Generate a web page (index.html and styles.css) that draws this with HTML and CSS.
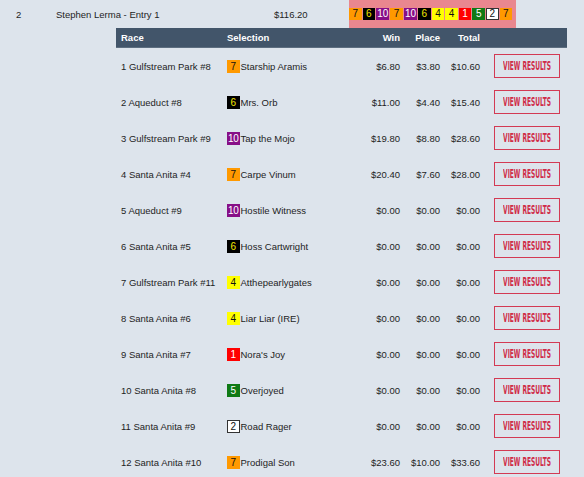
FILE: index.html
```html
<!DOCTYPE html>
<html>
<head>
<meta charset="utf-8">
<link rel="stylesheet" href="styles.css">
</head>
<body>
<div class="entry">
  <div class="entry-row">
    <span class="rank">2</span>
    <span class="name">Stephen Lerma - Entry 1</span>
    <span class="amount">$116.20</span>
    <div class="picks">
      <span class="pp p7">7</span><span class="pp p6">6</span><span class="pp p10">10</span><span class="pp p7">7</span><span class="pp p10">10</span><span class="pp p6">6</span><span class="pp p4">4</span><span class="pp p4">4</span><span class="pp p1">1</span><span class="pp p5">5</span><span class="pp p2">2</span><span class="pp p7">7</span>
    </div>
  </div>
  <div class="detail">
    <div class="drow dhead">
      <span class="c-race">Race</span>
      <span class="c-sel">Selection</span>
      <span class="c-num">Win</span>
      <span class="c-num">Place</span>
      <span class="c-num">Total</span>
      <span class="c-btn"></span>
    </div>
    <div class="drow"><span class="c-race">1 Gulfstream Park #8</span><span class="c-sel"><span class="pp p7">7</span>Starship Aramis</span><span class="c-num">$6.80</span><span class="c-num">$3.80</span><span class="c-num">$10.60</span><span class="c-btn"><a class="btn"><span>VIEW RESULTS</span></a></span></div>
    <div class="drow"><span class="c-race">2 Aqueduct #8</span><span class="c-sel"><span class="pp p6">6</span>Mrs. Orb</span><span class="c-num">$11.00</span><span class="c-num">$4.40</span><span class="c-num">$15.40</span><span class="c-btn"><a class="btn"><span>VIEW RESULTS</span></a></span></div>
    <div class="drow"><span class="c-race">3 Gulfstream Park #9</span><span class="c-sel"><span class="pp p10">10</span>Tap the Mojo</span><span class="c-num">$19.80</span><span class="c-num">$8.80</span><span class="c-num">$28.60</span><span class="c-btn"><a class="btn"><span>VIEW RESULTS</span></a></span></div>
    <div class="drow"><span class="c-race">4 Santa Anita #4</span><span class="c-sel"><span class="pp p7">7</span>Carpe Vinum</span><span class="c-num">$20.40</span><span class="c-num">$7.60</span><span class="c-num">$28.00</span><span class="c-btn"><a class="btn"><span>VIEW RESULTS</span></a></span></div>
    <div class="drow"><span class="c-race">5 Aqueduct #9</span><span class="c-sel"><span class="pp p10">10</span>Hostile Witness</span><span class="c-num">$0.00</span><span class="c-num">$0.00</span><span class="c-num">$0.00</span><span class="c-btn"><a class="btn"><span>VIEW RESULTS</span></a></span></div>
    <div class="drow"><span class="c-race">6 Santa Anita #5</span><span class="c-sel"><span class="pp p6">6</span>Hoss Cartwright</span><span class="c-num">$0.00</span><span class="c-num">$0.00</span><span class="c-num">$0.00</span><span class="c-btn"><a class="btn"><span>VIEW RESULTS</span></a></span></div>
    <div class="drow"><span class="c-race">7 Gulfstream Park #11</span><span class="c-sel"><span class="pp p4">4</span>Atthepearlygates</span><span class="c-num">$0.00</span><span class="c-num">$0.00</span><span class="c-num">$0.00</span><span class="c-btn"><a class="btn"><span>VIEW RESULTS</span></a></span></div>
    <div class="drow"><span class="c-race">8 Santa Anita #6</span><span class="c-sel"><span class="pp p4">4</span>Liar Liar (IRE)</span><span class="c-num">$0.00</span><span class="c-num">$0.00</span><span class="c-num">$0.00</span><span class="c-btn"><a class="btn"><span>VIEW RESULTS</span></a></span></div>
    <div class="drow"><span class="c-race">9 Santa Anita #7</span><span class="c-sel"><span class="pp p1">1</span>Nora's Joy</span><span class="c-num">$0.00</span><span class="c-num">$0.00</span><span class="c-num">$0.00</span><span class="c-btn"><a class="btn"><span>VIEW RESULTS</span></a></span></div>
    <div class="drow"><span class="c-race">10 Santa Anita #8</span><span class="c-sel"><span class="pp p5">5</span>Overjoyed</span><span class="c-num">$0.00</span><span class="c-num">$0.00</span><span class="c-num">$0.00</span><span class="c-btn"><a class="btn"><span>VIEW RESULTS</span></a></span></div>
    <div class="drow"><span class="c-race">11 Santa Anita #9</span><span class="c-sel"><span class="pp p2">2</span>Road Rager</span><span class="c-num">$0.00</span><span class="c-num">$0.00</span><span class="c-num">$0.00</span><span class="c-btn"><a class="btn"><span>VIEW RESULTS</span></a></span></div>
    <div class="drow"><span class="c-race">12 Santa Anita #10</span><span class="c-sel"><span class="pp p7">7</span>Prodigal Son</span><span class="c-num">$23.60</span><span class="c-num">$10.00</span><span class="c-num">$33.60</span><span class="c-btn"><a class="btn"><span>VIEW RESULTS</span></a></span></div>
  </div>
</div>
</body>
</html>
```

FILE: styles.css
```css
html, body {
  margin: 0;
  padding: 0;
  background: #dde4ec;
}
body {
  font-family: "Liberation Sans", Arial, sans-serif;
  font-size: 9.5px;
  color: #1e1e1e;
}
.entry-row {
  display: grid;
  grid-template-columns: 40px 218px 75px 167px;
  padding-left: 16px;
  height: 28px;
  align-items: center;
}
.picks {
  background: #e9878f;
  height: 28px;
  display: flex;
  align-items: center;
  gap: 1px;
}
.pp {
  display: inline-block;
  box-sizing: border-box;
  min-width: 12.6px;
  height: 12px;
  line-height: 12px;
  padding: 0 1px;
  text-align: center;
  font-size: 10px;
}
.p7 { background: #ff9900; color: #111; }
.p6 { background: #000; color: #f3e600; }
.p10 { background: #870f87; color: #fff; }
.p4 { background: #ffff00; color: #111; }
.p1 { background: #f00; color: #fff; }
.p5 { background: #0f7a15; color: #fff; }
.p2 { background: #fff; color: #111; border: 1px solid #333; line-height: 10px; }
.detail {
  margin-left: 116px;
  width: 451px;
}
.drow {
  display: grid;
  grid-template-columns: 105px 129px 55px 40px 40px 82px;
  height: 36px;
  align-items: center;
}
.dhead {
  height: 20px;
  background: #42556a;
  color: #fff;
  font-weight: bold;
  border-bottom: 1px solid #5d6e80;
  box-sizing: border-box;
}
.c-race { padding-left: 5px; }
.c-sel { padding-left: 6px; display: flex; align-items: center; white-space: nowrap; }
.c-sel .pp {
  margin-right: 1px;
  width: 12.5px;
  min-width: 0;
  padding: 0;
  height: 13px;
  line-height: 13px;
  letter-spacing: -0.3px;
}
.c-sel .p2 { line-height: 11px; }
.c-num { text-align: right; padding-right: 5px; }
.c-btn { padding-left: 9px; }
.btn {
  display: flex;
  align-items: center;
  justify-content: center;
  box-sizing: border-box;
  width: 66px;
  height: 24px;
  border: 1px solid #d33a54;
  color: #d02c48;
  overflow: hidden;
}
.btn span {
  display: inline-block;
  font-family: "DejaVu Sans Condensed", "DejaVu Sans", sans-serif;
  font-stretch: condensed;
  font-weight: bold;
  font-size: 11.5px;
  white-space: nowrap;
  transform: scaleX(0.57);
}
```
